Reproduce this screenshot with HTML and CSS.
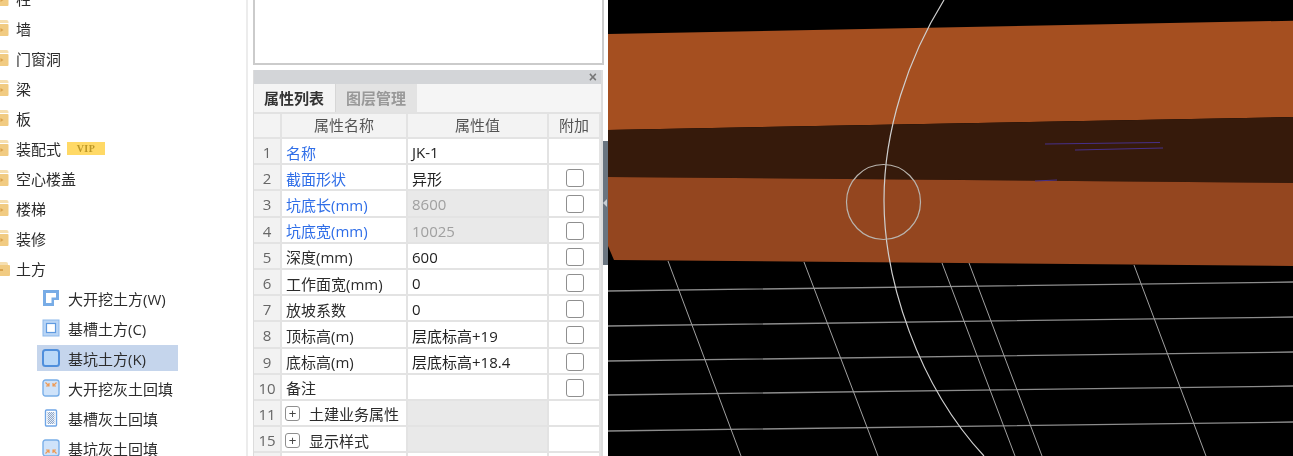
FILE: index.html
```html
<!DOCTYPE html>
<html lang="zh">
<head>
<meta charset="utf-8">
<title>属性列表</title>
<link rel="stylesheet" href="styles.css">
</head>
<body>
<svg class="defs" width="0" height="0" aria-hidden="true">
  <symbol id="folder" viewBox="0 0 10 18">
    <path d="M-4 3 Q-4 1 -2 1 H6 Q8 1 8 3 V4 H-4Z" fill="#f6dfb0"/>
    <rect x="-4" y="5" width="12" height="12" rx="1" fill="#f1cb82"/>
    <path d="M0 9 L3 11 L0 13Z" fill="#d9a24e"/>
  </symbol>
  <symbol id="folder-open" viewBox="0 0 11 18">
    <path d="M-4 3 H6 Q8 3 8 5 V6 H-4Z" fill="#f6dfb0"/>
    <rect x="-4" y="6" width="14" height="11" rx="1" fill="#f1cb82"/>
    <rect x="0" y="10" width="3" height="2" fill="#d9a24e"/>
  </symbol>
  <pattern id="dither" width="2" height="2" patternUnits="userSpaceOnUse">
    <rect width="2" height="2" fill="#e3ebf6"/>
    <rect width="1" height="1" fill="#8ea6c8"/>
    <rect x="1" y="1" width="1" height="1" fill="#8ea6c8"/>
  </pattern>
</svg>
<div class="app">
  <nav class="tree">
    <div class="node"><svg class="fold"><use href="#folder"/></svg><span>柱</span></div>
    <div class="node"><svg class="fold"><use href="#folder"/></svg><span>墙</span></div>
    <div class="node"><svg class="fold"><use href="#folder"/></svg><span>门窗洞</span></div>
    <div class="node"><svg class="fold"><use href="#folder"/></svg><span>梁</span></div>
    <div class="node"><svg class="fold"><use href="#folder"/></svg><span>板</span></div>
    <div class="node"><svg class="fold"><use href="#folder"/></svg><span>装配式</span><b class="vip">VIP</b></div>
    <div class="node"><svg class="fold"><use href="#folder"/></svg><span>空心楼盖</span></div>
    <div class="node"><svg class="fold"><use href="#folder"/></svg><span>楼梯</span></div>
    <div class="node"><svg class="fold"><use href="#folder"/></svg><span>装修</span></div>
    <div class="node"><svg class="fold"><use href="#folder-open"/></svg><span>土方</span></div>
    <div class="leaf">
      <svg class="ico" viewBox="0 0 18 18"><path d="M1 1H17V11H12V17H1Z" fill="#78ace6"/><path d="M4 4H14V8.5H9.5V14H4Z" fill="#fff"/></svg>
      <span>大开挖土方(W)</span>
    </div>
    <div class="leaf">
      <svg class="ico" viewBox="0 0 18 18"><rect x="1" y="1" width="16" height="16" fill="#b9d5f5" stroke="#8db9ec"/><rect x="4.5" y="4.5" width="9" height="9" fill="#fff" stroke="#5f9ae0" stroke-width="1.2"/></svg>
      <span>基槽土方(C)</span>
    </div>
    <div class="leaf selected">
      <svg class="ico" viewBox="0 0 18 18"><rect x="1" y="1" width="16" height="16" rx="2.5" fill="#b9d8f8" stroke="#4f8fdc" stroke-width="2"/></svg>
      <span>基坑土方(K)</span>
    </div>
    <div class="leaf">
      <svg class="ico" viewBox="0 0 18 18"><rect x="1" y="1" width="16" height="16" rx="2.5" fill="#cfe3fa" stroke="#78aee8" stroke-width="1.4"/><path d="M3.5 3.5L7 7M7 4V7H4M14.5 3.5L11 7M11 4V7H14" fill="none" stroke="#ee9a55" stroke-width="1.2"/></svg>
      <span>大开挖灰土回填</span>
    </div>
    <div class="leaf">
      <svg class="ico" viewBox="0 0 18 18"><rect x="3.5" y="1" width="11" height="16" rx="1" fill="#fff" stroke="#6fa5e6" stroke-width="1.4"/><rect x="5.5" y="3" width="7" height="12" fill="url(#dither)"/></svg>
      <span>基槽灰土回填</span>
    </div>
    <div class="leaf">
      <svg class="ico" viewBox="0 0 18 18"><rect x="1" y="1" width="16" height="16" rx="2.5" fill="#cfe3fa" stroke="#78aee8" stroke-width="1.4"/><path d="M3.5 14.5L7 11M7 14V11H4M14.5 14.5L11 11M11 14V11H14" fill="none" stroke="#ee9a55" stroke-width="1.2"/></svg>
      <span>基坑灰土回填</span>
    </div>
  </nav>

  <main class="mid">
    <div class="topbox"></div>
    <section class="panel">
      <div class="titlebar"><span class="close">×</span></div>
      <div class="tabs">
        <div class="tab active">属性列表</div>
        <div class="tab">图层管理</div>
      </div>
      <div class="grid">
        <div class="c head"></div><div class="c head ctr">属性名称</div><div class="c head ctr">属性值</div><div class="c head ctr">附加</div>

        <div class="c num">1</div><div class="c name blue">名称</div><div class="c val">JK-1</div><div class="c add"></div>
        <div class="c num">2</div><div class="c name blue">截面形状</div><div class="c val">异形</div><div class="c add"><i class="chk"></i></div>
        <div class="c num">3</div><div class="c name blue">坑底长(mm)</div><div class="c val off">8600</div><div class="c add"><i class="chk"></i></div>
        <div class="c num">4</div><div class="c name blue">坑底宽(mm)</div><div class="c val off">10025</div><div class="c add"><i class="chk"></i></div>
        <div class="c num">5</div><div class="c name">深度(mm)</div><div class="c val">600</div><div class="c add"><i class="chk"></i></div>
        <div class="c num">6</div><div class="c name">工作面宽(mm)</div><div class="c val">0</div><div class="c add"><i class="chk"></i></div>
        <div class="c num">7</div><div class="c name">放坡系数</div><div class="c val">0</div><div class="c add"><i class="chk"></i></div>
        <div class="c num">8</div><div class="c name">顶标高(m)</div><div class="c val">层底标高+19</div><div class="c add"><i class="chk"></i></div>
        <div class="c num">9</div><div class="c name">底标高(m)</div><div class="c val">层底标高+18.4</div><div class="c add"><i class="chk"></i></div>
        <div class="c num">10</div><div class="c name">备注</div><div class="c val"></div><div class="c add"><i class="chk"></i></div>
        <div class="c num">11</div><div class="c name group"><i class="plus">+</i>土建业务属性</div><div class="c val off"></div><div class="c add"></div>
        <div class="c num">15</div><div class="c name group"><i class="plus">+</i>显示样式</div><div class="c val off"></div><div class="c add"></div>
        <div class="c num"></div><div class="c name"></div><div class="c val"></div><div class="c add"></div>
      </div>
    </section>
    <div class="splitter"><i class="arrow"></i></div>
  </main>

  <div class="view">
    <svg class="scene" viewBox="608 0 685 456" width="685" height="456">
      <rect x="608" y="0" width="685" height="456" fill="#000"/>
      <path class="hlines" d="M608 291L1293 282M608 326L1293 317M608 361L1293 352M608 395L1293 386M608 431L1293 422"/>
      <path class="vlines" d="M668 261L741 456M804 262L878 456M942 263L1015 456M969 263L1042 456M1134 265L1206 456"/>
      <polygon points="608,34 1293,20.7 1293,117 608,130" fill="#a54f20"/>
      <polygon points="608,130 1293,117 1293,183 608,177" fill="#361a0b"/>
      <polygon points="608,177 1293,183 1293,266 614,260 608,246" fill="#94461f"/>
      <path class="arc" d="M944 0C908 58 884 130 884 200C884 280 918 385 984 456"/>
      <ellipse class="ring" cx="883.5" cy="202" rx="37" ry="37.5"/>
      <path class="plum" d="M1045 144L1160 142.5M1075 150L1163 148M1035 181L1057 180"/>
    </svg>
  </div>
</div>
</body>
</html>
```

FILE: styles.css
```css
* { box-sizing: border-box; }
html, body { margin: 0; height: 100%; overflow: hidden; background: #fff; }
body { font-family: "Open Sans", "Noto Sans CJK SC", sans-serif; font-size: 15px; color: #2c2c2c; }
.defs { position: absolute; }

.app { display: flex; height: 456px; overflow: hidden; }

/* left tree */
.tree { width: 248px; flex: none; margin-top: -17px; height: 473px; border-right: 2px solid #ececec; filter: blur(.3px); }
.node, .leaf { height: 30px; display: flex; align-items: center; white-space: nowrap; }
.fold { width: 11px; height: 18px; flex: none; margin-right: 5px; }
.vip { margin-left: 6px; width: 38px; height: 13px; background: #ffd966; color: #bd9726; font: bold 10px/13px "Liberation Serif", serif; text-align: center; letter-spacing: .5px; }
.leaf { width: 141px; margin-left: 37px; padding-left: 5px; height: 30px; }
.leaf.selected { background: linear-gradient(#fff 0 2px, #c5d5ec 2px 28px, #fff 28px); }
.ico { width: 18px; height: 18px; flex: none; margin-right: 8px; }

/* middle column */
.mid { width: 360px; flex: none; padding-left: 5px; position: relative; }
.topbox { height: 64.5px; width: 351px; border: 2px solid #cbcbcb; border-top: 0; background: #fff; margin-bottom: 5.5px; }
.panel { width: 350px; border-left: 1px solid #dcdcdc; border-right: 2px solid #dcdcdc; filter: blur(.3px); }
.titlebar { height: 14px; background: #d3d5d8; display: flex; justify-content: flex-end; align-items: center; padding-right: 4px; }
.close { font: bold 14px/14px "Liberation Sans", sans-serif; color: #777; }
.tabs { display: flex; height: 30px; background: #f5f5f5; border-bottom: 2px solid #e2e2e2; }
.tab { width: 82px; padding-left: 10px; line-height: 29px; background: #e3e3e3; color: #999; font-weight: 600; border-left: 1px solid #d6d6d6; }
.tab.active { width: 81px; background: #f4f4f4; color: #333; font-weight: 700; border-left: 0; }
.grid { display: grid; grid-template-columns: 28px 126px 141px 52px; grid-template-rows: 25px; grid-auto-rows: 26.2px; }
.c { display: flex; align-items: center; border-right: 2px solid #e3e3e3; border-bottom: 2px solid #e3e3e3; padding-top: 2px; padding-left: 4px; min-width: 0; white-space: nowrap; }
.head { background: #f3f3f3; color: #555; padding-top: 0; padding-bottom: 2px; }
.ctr { justify-content: center; padding-left: 0; }
.num { background: #f2f2f2; justify-content: center; padding-left: 0; color: #666; }
.blue { color: #2f6ee8; }
.val { color: #222; padding-left: 4px; }
.off { background: #e9e9e9; color: #a0a0a0; }
.add { justify-content: center; padding-left: 2px; }
.chk { width: 18px; height: 18px; border: 1.5px solid #8f8f8f; border-radius: 3px; background: #fff; }
.group { padding-left: 3px; }
.plus { width: 15px; height: 15px; margin-right: 9px; border: 1px solid #8f8f8f; border-radius: 3px; font: normal 13px/13px "Liberation Sans", sans-serif; text-align: center; color: #444; flex: none; }

.splitter { position: absolute; left: 355px; top: 141px; width: 5px; height: 124px; background: #6a7580; display: flex; align-items: center; }
.arrow { width: 0; height: 0; border: 4px solid transparent; border-right: 4px solid #c9ced3; border-left: 0; }

/* 3D view */
.view { flex: 1; min-width: 0; }
.scene { display: block; }
.hlines { fill: none; stroke: #8c8c8c; stroke-width: 1.3; }
.vlines { fill: none; stroke: #a0a0a0; stroke-width: 1; }
.arc { fill: none; stroke: #cfcfcf; stroke-width: 1.2; }
.ring { fill: none; stroke: #b9b4ae; stroke-width: 1.2; }
.plum { fill: none; stroke: #47308a; stroke-width: 1; }
```
